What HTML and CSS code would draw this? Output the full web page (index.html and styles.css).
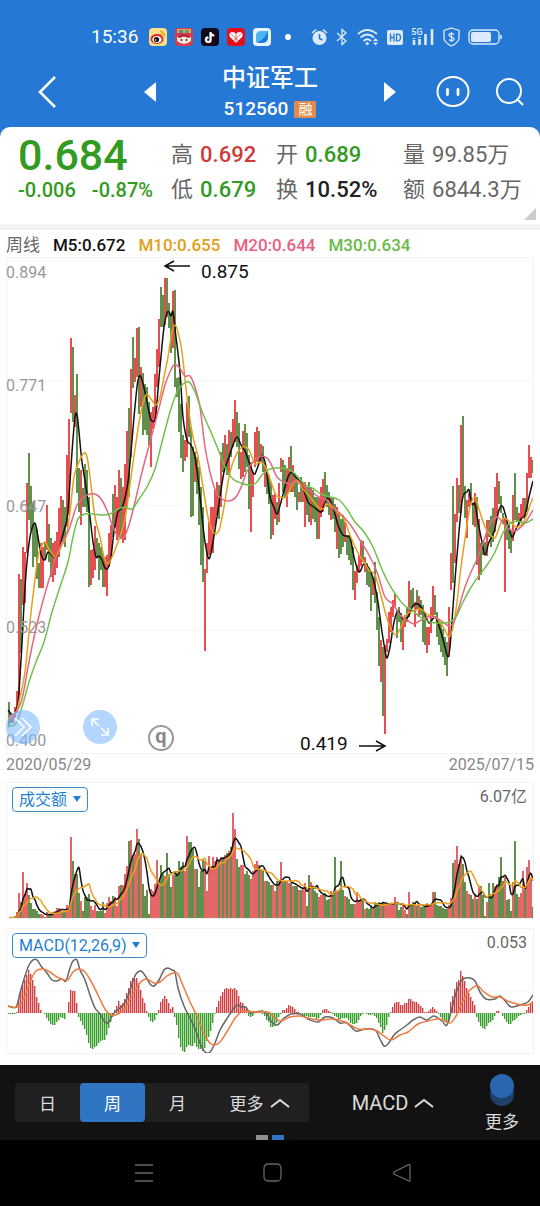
FILE: index.html
```html
<!DOCTYPE html>
<html lang="zh-CN">
<head>
    <meta charset="UTF-8">
    <meta name="viewport" content="width=device-width, initial-scale=1.0">
    <title>中证军工 512560</title>
    <link rel="stylesheet" href="styles.css">
</head>
<body>
    <header class="header">
        <div class="status-bar">
            <span class="clock">15:36</span>
            <div class="apps">
                <svg viewBox="0 0 18 18"><rect width="18" height="18" rx="4" fill="#fbe08a"/><ellipse cx="8" cy="11" rx="6.5" ry="5" fill="#d9272a"/><ellipse cx="8" cy="11.500" rx="4.600" ry="3.600" fill="#fff"/><circle cx="7.500" cy="11.500" r="2.600" fill="#111"/><circle cx="6.700" cy="12" r=".8" fill="#fff"/><path d="M11 3.500a4.500 4.500 0 0 1 4.500 5M11 5.800a2.200 2.200 0 0 1 2.200 2.500" stroke="#f39a1e" stroke-width="1.300" fill="none"/></svg>
                <svg viewBox="0 0 18 18"><rect width="18" height="18" rx="4" fill="#d93a4c"/><rect x="2" y="1" width="14" height="4" fill="#e8a34a"/><rect x="4" y="2" width="4" height="3" fill="#3e8fa0"/><rect x="10" y="2" width="4" height="3" fill="#58a888"/><path d="M2 9q7-5 14 0v4q-7 6-14 0z" fill="#fbe3d8"/><path d="M2 9q7-6 14 0l-3 1q-4-3-8 0z" fill="#b92338"/><circle cx="6.500" cy="12" r=".9" fill="#222"/><circle cx="11.500" cy="12" r=".9" fill="#222"/></svg>
                <svg viewBox="0 0 18 18"><rect width="18" height="18" rx="4" fill="#120b1c"/><g fill="none" stroke-width="1.800"><path d="M9.200 4v7.500a2.300 2.300 0 1 1-2.300-2.300M9.200 4q.4 3 3.600 3.300" stroke="#35d6d6"/><path d="M10 4.600v7.500a2.300 2.300 0 1 1-2.300-2.300M10 4.600q.4 3 3.600 3.300" stroke="#ec3a5c"/><path d="M9.600 4.300v7.500a2.300 2.300 0 1 1-2.300-2.300M9.600 4.300q.4 3 3.600 3.300" stroke="#fff"/></g></svg>
                <svg viewBox="0 0 18 18"><rect width="18" height="18" rx="4" fill="#e50f1b"/><path d="M9 15L3 9q-2-4 2-5 3 0 4 2 1-2 4-2 4 1 2 5z" fill="#fff"/><path d="M4 6l8 7M14 6l-8 7M9 6v9" stroke="#e50f1b" stroke-width=".6"/></svg>
                <svg viewBox="0 0 18 18"><rect width="18" height="18" rx="4" fill="#e9f5fd"/><path d="M3 14V8q0-5 5-5h7v5q0 6-6 6z" fill="#4db4f3"/><path d="M3.500 15Q12 11 15 3v6q0 6-6 6z" fill="#1b78dd"/></svg>
            </div>
            <span class="dot"></span>
            <div class="system">
                <svg width="17" height="18" viewBox="0 0 17 18"><circle cx="8.500" cy="10" r="7" fill="#dcebfb"/><path d="M8.500 6v4.500l3 1.500" fill="none" stroke="#2678d5" stroke-width="1.500"/><path d="M1 5l4-3.500M16 5l-4-3.500" stroke="#dcebfb" stroke-width="1.600"/></svg>
                <svg width="12" height="18" viewBox="0 0 12 18"><path d="M1 5l9 8-4 3.500v-15L10 5l-9 8" fill="none" stroke="#dcebfb" stroke-width="1.300"/></svg>
                <svg width="22" height="18" viewBox="0 0 22 18"><g fill="none" stroke="#dcebfb" stroke-width="1.900"><path d="M1 6q9-8 19 0M3.500 9.500q7-6 13.500 0M6.500 13q4-3.500 7.500 0"/></g><circle cx="10.200" cy="15.500" r="1.600" fill="#dcebfb"/><path d="M16 13l2.500-3 2.500 3zM16 14.500l2.500 3 2.500-3z" fill="#dcebfb"/></svg>
                <svg width="16" height="18" viewBox="0 0 16 18"><rect y="2" width="16" height="15" rx="2" fill="#dcebfb"/><path d="M3.500 5.500v8M7 5.500v8M3.500 9.500H7M9.500 5.500v8M9.500 6.200q4-.4 4 3.300t-4 3.300" fill="none" stroke="#2678d5" stroke-width="1.300"/></svg>
                <div class="signal"><span>5G</span><svg width="23" height="18" viewBox="0 0 23 18"><path d="M3 12v5M3 10v1M8.500 11v6M8.500 9v1M14.500 6v11M21 1v16" stroke="#dcebfb" stroke-width="2.600"/></svg></div>
                <svg width="17" height="20" viewBox="0 0 17 20"><path d="M8.500 1l7.500 2.500v7q0 5-7.500 8.500Q1 15.500 1 10.500v-7z" fill="none" stroke="#dcebfb" stroke-width="1.300"/><path d="M11 7.500q-2.500-2-4.500-.5t2 3 2 3-4.500-.2M8.500 5v10" fill="none" stroke="#dcebfb" stroke-width="1.200"/></svg>
                <svg width="34" height="18" viewBox="0 0 34 18"><rect x="1" y="2" width="30" height="14" rx="4" fill="none" stroke="#dcebfb" stroke-width="1.400"/><rect x="3" y="4" width="20" height="10" rx="2" fill="#dcebfb"/><path d="M33 7v4" stroke="#dcebfb" stroke-width="1.600"/></svg>
            </div>
        </div>
        <nav class="title-bar">
            <div class="title-left">
                <button class="icon-button" aria-label="返回"><svg width="20" height="34" viewBox="0 0 20 34"><path d="M18 2L3 17l15 15" fill="none" stroke="#fff" stroke-width="2.500"/></svg></button>
                <button class="icon-button" aria-label="上一个"><svg width="12" height="20" viewBox="0 0 12 20"><path d="M12 0v20L0 10z" fill="#fff"/></svg></button>
            </div>
            <div class="title">
                <h1>中证军工</h1>
                <p>512560 <span class="badge">融</span></p>
            </div>
            <div class="title-right">
                <button class="icon-button next" aria-label="下一个"><svg width="12" height="20" viewBox="0 0 12 20"><path d="M0 0v20l12-10z" fill="#fff"/></svg></button>
                <button class="icon-button" aria-label="助手"><svg width="34" height="32" viewBox="0 0 34 32"><ellipse cx="17" cy="15.500" rx="15.500" ry="14.500" fill="none" stroke="#fff" stroke-width="2"/><path d="M11.500 13.500v5M22 13.500v5" stroke="#fff" stroke-width="2.800" stroke-linecap="round"/></svg></button>
                <button class="icon-button" aria-label="搜索"><svg width="28" height="28" viewBox="0 0 28 28"><circle cx="13" cy="13" r="12" fill="none" stroke="#fff" stroke-width="2"/><path d="M21 21l6 6" stroke="#fff" stroke-width="2"/></svg></button>
            </div>
        </nav>
    </header>

    <section class="quote">
        <div class="price">
            <strong>0.684</strong>
            <p><span>-0.006</span><span>-0.87%</span></p>
        </div>
        <dl class="stats">
            <div><dt>高</dt><dd class="up">0.692</dd></div>
            <div><dt>开</dt><dd class="down">0.689</dd></div>
            <div><dt>量</dt><dd class="plain">99.85万</dd></div>
            <div><dt>低</dt><dd class="down">0.679</dd></div>
            <div><dt>换</dt><dd>10.52%</dd></div>
            <div><dt>额</dt><dd class="plain">6844.3万</dd></div>
        </dl>
        <span class="corner"></span>
    </section>

    <main class="charts">
        <div class="legend">
            <span class="period">周线</span>
            <span class="ma5">M5:0.672</span>
            <span class="ma10">M10:0.655</span>
            <span class="ma20">M20:0.644</span>
            <span class="ma30">M30:0.634</span>
        </div>

        <div class="panel">
            <svg class="chart" viewBox="6 0 528 497">
                <path class="grid" d="M6 124H534M6 249H534M6 373H534"/>
                <g id="candles"></g>
                <g id="averages"></g>
                <g class="axis">
                    <text x="6" y="21">0.894</text>
                    <text x="6" y="134">0.771</text>
                    <text x="6" y="255">0.647</text>
                    <text x="6" y="376">0.523</text>
                    <text x="6" y="489">0.400</text>
                </g>
                <g class="note">
                    <text x="201" y="21">0.875</text>
                    <path d="M190 9H165M174 4l-9 5 9 5"/>
                    <text x="300" y="493">0.419</text>
                    <path d="M359 489H385M376 484l9 5-9 5"/>
                </g>
            </svg>
            <div class="tools">
                <div class="tool-group">
                    <button class="round" aria-label="展开"><svg width="34" height="34" viewBox="0 0 34 34"><path d="M9 8l9 9-9 9M16 8l9 9-9 9" fill="none" stroke="#fff" stroke-width="1.600"/></svg></button>
                    <button class="round" aria-label="全屏"><svg width="34" height="34" viewBox="0 0 34 34"><path d="M9 16V9h7M9 9l7 7M25 18v7h-7M25 25l-7-7" fill="none" stroke="#fff" stroke-width="1.600"/></svg></button>
                </div>
                <span class="mark">q</span>
            </div>
        </div>
        <div class="dates"><span>2020/05/29</span><span>2025/07/15</span></div>

        <div class="panel volume">
            <svg class="chart" viewBox="6 0 528 137">
                <path class="grid" d="M6 68H534"/>
                <g id="volume"></g>
            </svg>
            <label class="picker"><select aria-label="指标"><option>成交额</option></select></label>
            <span class="value">6.07亿</span>
        </div>

        <div class="panel macd">
            <svg class="chart" viewBox="6 0 528 126">
                <path class="grid" d="M6 63H534M6 85H534"/>
                <g id="macd"></g>
            </svg>
            <label class="picker"><select aria-label="副图指标"><option>MACD(12,26,9)</option></select></label>
            <span class="value">0.053</span>
        </div>
    </main>

    <footer class="toolbar">
        <div class="tabs">
            <button>日</button>
            <button class="active">周</button>
            <button>月</button>
            <button class="wide">更多 <svg width="20" height="10" viewBox="0 0 20 10"><path d="M1 9l9-7 9 7"/></svg></button>
        </div>
        <button class="indicator">MACD <svg width="20" height="10" viewBox="0 0 20 10"><path d="M1 9l9-7 9 7"/></svg></button>
        <button class="more"><svg width="24" height="32" viewBox="0 0 24 32"><circle cx="12" cy="20" r="12" fill="#1e4069"/><circle cx="12" cy="12" r="12" fill="#2a67b1"/></svg>更多</button>
        <div class="pager"><span></span><span class="current"></span></div>
    </footer>
    <div class="system-nav">
        <button aria-label="菜单"><svg width="20" height="20" viewBox="0 0 20 20"><path d="M1 2h18M1 10h18M1 18h18"/></svg></button>
        <button aria-label="主页"><svg width="20" height="20" viewBox="0 0 20 20"><rect x="1" y="1" width="17" height="17" rx="4"/></svg></button>
        <button aria-label="后退"><svg width="20" height="20" viewBox="0 0 20 20"><path d="M17 1.500q1 0 1 1v15q0 1-1 .5L2 11q-1-1 0-2z"/></svg></button>
    </div>

    <script src="chart.js"></script>
</body>
</html>
```

FILE: styles.css
```css
* {
    box-sizing: border-box;
}

body {
    margin: 0;
    background-color: #2678d5;
    font-family: Roboto, "Noto Sans CJK SC", sans-serif;
    color: #222;
}

h1, p, dl, dd {
    margin: 0;
}

button {
    padding: 0;
    border: none;
    background: none;
    color: inherit;
    font: inherit;
    cursor: pointer;
}

svg {
    display: block;
    flex: none;
}

.header {
    color: #fff;
}

.status-bar {
    display: flex;
    align-items: center;
    height: 61px;
    padding: 12px 38px 0 91px;
}

.clock {
    width: 58px;
    font-size: 19px;
}

.apps {
    display: flex;
    gap: 8px;
}

.apps svg {
    width: 18px;
    height: 18px;
}

.dot {
    width: 6px;
    height: 6px;
    margin-left: 14px;
    border-radius: 50%;
    background-color: #fff;
}

.system {
    display: flex;
    flex: 1;
    align-items: center;
    justify-content: space-between;
    margin-left: 20px;
}

.signal {
    position: relative;
}

.signal span {
    position: absolute;
    top: -1px;
    left: 0;
    font-size: 9px;
    font-weight: 500;
    line-height: 10px;
    color: #dcebfb;
}

.title-bar {
    display: grid;
    grid-template-columns: 1fr 200px 1fr;
    align-items: center;
    padding: 2px 0 6px;
}

.title-left, .title-right {
    display: flex;
    align-items: center;
    justify-content: space-between;
}

.title-left {
    padding: 0 14px 0 37px;
}

.title-right {
    padding: 0 16px 0 14px;
}

.next {
    margin-right: 14px;
}

.title {
    text-align: center;
}

.title h1 {
    font-size: 24px;
    font-weight: 500;
    line-height: 30px;
}

.title p {
    display: flex;
    align-items: center;
    justify-content: center;
    gap: 6px;
    margin-top: 4px;
    font-size: 19px;
    font-weight: 500;
    line-height: 24px;
}

.badge {
    width: 22px;
    border-radius: 1px;
    background-color: #e08b4c;
    font-size: 14px;
    font-weight: 400;
    line-height: 17px;
}

.quote {
    position: relative;
    display: flex;
    height: 97px;
    padding: 9px 16px 0 18px;
    border-radius: 10px 10px 0 0;
    background-color: #fff;
}

.price {
    width: 153px;
    color: #339a22;
    font-weight: 500;
}

.price strong {
    display: block;
    font-size: 43px;
    font-weight: 500;
    line-height: 38px;
}

.price p {
    display: flex;
    gap: 16px;
    margin-top: 4px;
    font-size: 20px;
    line-height: 24px;
    white-space: nowrap;
}

.stats {
    display: grid;
    flex: 1;
    grid-template-columns: 105px 127px 1fr;
    grid-auto-rows: 35px;
}

.stats div {
    display: flex;
    gap: 7px;
    font-size: 22px;
    line-height: 38px;
    white-space: nowrap;
}

.stats dt {
    color: #666;
}

.stats dd {
    font-weight: 500;
}

.stats .up {
    color: #cf3a3a;
}

.stats .down {
    color: #339a22;
}

.stats .plain {
    font-weight: 400;
    color: #666;
}

.corner {
    position: absolute;
    right: 4px;
    bottom: 4px;
    border-bottom: 12px solid #ccc;
    border-left: 12px solid transparent;
}

.charts {
    padding: 0 6px 11px;
    border-top: 6px solid #f3f3f3;
    background-color: #fff;
}

.legend {
    display: flex;
    gap: 13px;
    padding-top: 3px;
    font-size: 17px;
    font-weight: 500;
    line-height: 24px;
    white-space: nowrap;
}

.period {
    font-weight: 400;
    color: #666;
}

.ma5 {
    color: #111;
}

.ma10 {
    color: #e0a018;
}

.ma20 {
    color: #e8607f;
}

.ma30 {
    color: #6aba48;
}

.panel {
    position: relative;
    outline: 1px solid #f3f3f3;
    outline-offset: -1px;
}

.chart {
    width: 100%;
    height: auto;
    overflow: visible;
}

.chart path {
    fill: none;
}

.grid {
    stroke: #f5f5f5;
}

.line {
    stroke-width: 1.5;
    stroke-linejoin: round;
}

.axis text {
    fill: #999;
    font-size: 16px;
}

.note text {
    fill: #111;
    font-size: 19px;
}

.note path {
    stroke: #111;
    stroke-width: 1.5;
}

.tools {
    position: absolute;
    bottom: 3px;
    left: 0;
    display: flex;
    align-items: flex-end;
    gap: 31px;
}

.tool-group {
    display: flex;
    gap: 43px;
    padding-bottom: 7px;
}

.round {
    border-radius: 50%;
    background-color: rgba(128, 187, 255, 0.6);
}

.mark {
    width: 26px;
    height: 26px;
    border: 2px solid #999;
    border-radius: 50%;
    color: #888;
    font-size: 20px;
    font-weight: 700;
    line-height: 18px;
    text-align: center;
}

.dates {
    display: flex;
    justify-content: space-between;
    color: #888;
    font-size: 16px;
    line-height: 22px;
    padding-bottom: 6px;
}

.picker {
    position: absolute;
    top: 5px;
    left: 6px;
}

.picker::after {
    position: absolute;
    top: 9px;
    right: 7px;
    border-top: 6px solid #1d7fd0;
    border-right: 4px solid transparent;
    border-left: 4px solid transparent;
    content: "";
    pointer-events: none;
}

.picker select {
    height: 25px;
    padding: 0 19px 0 6px;
    border: 1px solid #3b8cc9;
    border-radius: 4px;
    background-color: #fff;
    appearance: none;
    color: #1d7fd0;
    font-family: inherit;
    font-size: 16px;
}

.value {
    position: absolute;
    top: 4px;
    right: 7px;
    color: #666;
    font-size: 16px;
    line-height: 22px;
}

.macd {
    margin-top: 9px;
}

.toolbar {
    position: relative;
    display: flex;
    align-items: center;
    justify-content: space-between;
    height: 75px;
    padding: 0 21px 0 15px;
    background-color: #121212;
    color: #ddd;
    font-size: 17px;
}

.toolbar path {
    fill: none;
    stroke: #ddd;
    stroke-width: 2;
}

.tabs {
    display: flex;
    border-radius: 4px;
    background-color: #202020;
}

.tabs button {
    width: 65px;
    height: 39px;
}

.tabs .wide {
    width: 99px;
}

.tabs .active {
    border-radius: 4px;
    background-color: #3075c2;
    color: #fff;
}

.tabs .wide, .indicator {
    display: flex;
    align-items: center;
    justify-content: center;
    gap: 6px;
}

.indicator {
    margin-right: 8px;
    font-size: 20px;
}

.more {
    display: flex;
    flex-direction: column;
    align-items: center;
    gap: 4px;
    padding-top: 2px;
    line-height: 24px;
}

.pager {
    position: absolute;
    bottom: 0;
    left: 0;
    display: flex;
    justify-content: center;
    gap: 4px;
    width: 100%;
}

.pager span {
    width: 12px;
    height: 5px;
    background-color: #8f8f8f;
}

.pager .current {
    background-color: #3075c2;
}

.system-nav {
    display: flex;
    justify-content: center;
    gap: 109px;
    padding: 23px 0 23px 5px;
    background-color: #000;
}

.system-nav path, .system-nav rect {
    fill: none;
    stroke: #666;
    stroke-width: 1.3;
}
```

FILE: chart.js
```js
const STEP = 2;
const START = 9;

// one entry per week: r = up, g = down, then the top and bottom of the bar
const weeks = `
g445-470 g456-466 r458-466 r450-461 r434-456 r317-443 g322-396 r290-348 r295-346 r226-296
g196-263 g229-273 g245-310 g266-300 g272-322 g306-331 r286-331 r290-331 g285-303 r248-293
g267-305 g281-320 r286-325 r284-318 r275-311 r251-300 r239-285 g243-285 g250-290 r198-270
r162-258 r81-156 g90-165 r138-170 g117-236 g211-255 r213-268 g231-250 g207-250 g213-255
g240-330 r293-328 r292-321 r269-313 g281-301 g286-323 g290-313 g296-330 r300-330 r298-339
r276-310 r268-300 g237-280 r228-270 r240-283 r213-280 g221-282 r230-286 r207-283 r174-250
g151-240 r112-200 g80-131 r101-125 r71-120 g70-157 r110-150 g116-178 g127-173 g130-178
g145-188 r155-210 r150-172 r117-163 r92-130 r62-110 g30-70 g38-70 r21-68 g21-60
g46-71 g56-96 r34-91 g33-130 g121-140 g120-175 g147-201 g178-215 r183-204 r145-200
g139-180 g170-260 g190-259 r195-225 g200-237 g210-268 g230-308 g250-325 r312-394 r286-316
r265-298 r250-295 r250-296 r233-270 r225-258 g228-262 r195-250 g186-215 r178-212 g187-218
r173-218 g175-200 r162-190 r143-185 g155-190 g166-212 r195-222 r174-220 g167-215 g176-210
g198-252 r205-275 r215-240 r175-210 r170-205 g174-205 r187-205 g189-215 r206-230 g215-237
g218-247 g225-282 r238-278 r236-262 g245-268 r226-265 r201-215 g203-235 g208-240 r211-250
r200-235 g189-235 r208-235 g216-240 g221-253 r235-245 g220-245 r225-245 r225-270 g230-258
g225-265 r230-268 g233-262 g240-265 g240-282 r241-282 r230-260 r222-255 g215-245 g228-250
g235-258 r241-263 g240-262 g247-275 r250-292 g255-301 g262-297 g258-290 r265-285 g278-298
g278-303 g283-308 g290-333 r314-343 r308-326 r298-315 r283-309 g284-305 r300-315 g306-328
g313-330 g315-354 r320-338 g305-346 g335-373 g360-409 r383-425 g390-459 r388-477 r382-395
r355-386 r350-375 r343-360 r337-350 g353-381 g350-365 g356-385 r360-393 r358-370 g350-365
r324-360 g333-355 g331-350 r345-370 g333-352 r339-360 g343-358 g348-385 g358-388 r370-396
r370-388 r350-376 r329-360 g338-358 g355-380 g362-388 g365-395 g372-400 g380-408 g385-419
r350-400 r296-333 g229-326 r257-306 r221-265 g228-256 r168-256 g159-238 g229-261 r243-281
r236-250 g226-246 g246-268 r236-270 g240-308 r262-323 g286-318 g285-298 g285-298 r263-299
g263-280 g259-290 g251-285 r230-275 r216-260 g224-247 g239-256 g256-267 r261-335 g265-283
g267-292 g273-296 r238-284 g216-263 g250-265 r256-268 r247-265 r241-260 g241-262 r216-255
r188-221 r200-221 g203-216`.trim().split(/\s+/).map((item) => {
    const [top, bottom] = item.slice(1).split("-").map(Number);
    return { up: item[0] === "r", top, bottom };
});

const amounts = [
    1, 1, 2, 3, 7, 26, 17, 47, 25, 36, 24, 16, 10, 10, 8, 5, 5, 4, 2, 7, 4, 5, 7, 8, 11, 11, 10, 7, 7, 14, 12,
    82, 58, 45, 45, 26, 18, 8, 22, 22, 25, 13, 9, 14, 8, 8, 8, 17, 6, 16, 22, 18, 23, 22, 13, 33, 34, 34, 45, 53,
    78, 79, 62, 65, 90, 80, 65, 35, 23, 29, 5, 30, 28, 35, 59, 38, 54, 45, 43, 66, 45, 32, 44, 48, 48, 58, 52, 57,
    48, 83, 77, 77, 70, 50, 50, 32, 48, 60, 58, 28, 63, 50, 62, 58, 62, 58, 62, 62, 64, 66, 68, 72, 106, 90, 60,
    52, 54, 54, 45, 48, 44, 40, 48, 55, 58, 54, 50, 48, 38, 38, 37,
    34, 34, 28, 38, 38, 57, 38, 38, 38, 36, 36, 33, 33, 33, 29, 29, 30, 36, 13, 44, 37, 33, 28, 26, 22, 24, 24, 26,
    19, 20, 28, 26, 62, 28, 28, 58, 29, 23, 22, 20, 15, 15, 15, 27, 18, 20, 20, 10, 11, 10, 13, 12, 17, 16, 17, 15,
    17, 15, 14, 15, 16, 14, 22, 16, 9, 12, 15, 9, 5, 27, 14, 17, 16, 13, 14, 12, 12, 12, 15, 15, 15, 27, 27, 14,
    13, 13, 11, 10, 10, 14, 21, 56, 59, 73, 55, 64, 55, 37, 28, 25, 24, 20, 24, 20, 33, 33, 24, 3, 17, 36, 25, 36,
    33, 35, 42, 62, 38, 42, 19, 20, 8, 37, 78, 25, 22, 26, 48, 29, 52, 59, 40, 12
];

const macdBars = [
    -1, -1, -1, -1, 1, 15, 22, 28, 33, 38, 43, 39, 33, 27, 16, 10, 3, 0, -1, -5, -8, -11, -12, -12, -9, -7, -4, -5,
    -6, 0, 11, 23, 22, 22, 10, -4, -8, -12, -16, -22, -30, -35, -36, -34, -33, -30, -28, -27, -27, -22, -15, -9, -4,
    3, 7, 12, 8, 10, 14, 20, 25, 32, 35, 34, 35, 30, 23, 15, 10, 2, -4, -8, -9, -7, -2, 3, 11, 14, 17, 14, 10, 4, 6,
    -4, -12, -25, -34, -38, -39, -34, -32, -33, -33, -30, -34, -36, -36, -38, -35, -28, -24, -18, -10, -1, 6, 12,
    17, 21, 24, 25, 24, 25, 24, 25, 23, 17, 11, 10, 7, 4, -3, -4, -3, 0, 2, 2, 2, -1, -3, -7, -9,
    -14, -14, -13, -10, -4, -1, 3, 3, 5, 8, 7, 6, 4, 1, 1, 0, -2, -3, -3, -4, -4, -4, -4, -6, -5, -2, 3, 4, 4, 2, 1,
    -1, -3, -4, -7, -6, -5, -5, -5, -7, -10, -11, -11, -10, -7, -3, -1, 0, -1, -2, -2, -1, -3, -5, -10, -14, -20,
    -17, -12, -4, 1, 6, 10, 11, 11, 8, 8, 10, 10, 14, 14, 12, 11, 11, 9, 7, 5, 1, 1, 2, 4, 6, 4, 2, -1, -4, -6, -8,
    -10, -9, 11, 17, 24, 31, 33, 42, 37, 32, 25, 20, 16, 12, 8, -4, -9, -13, -15, -16, -13, -10, -9, -7, -3, 2, 2,
    0, -3, -6, -9, -11, -11, -8, -7, -5, -3, -2, -1, -1, 3, 6, 9, 12
];

const lines = {
    ma30: "8,470 16,466 22,450 29,425 36,405 44,385 52,355 60,330 68,305 73,280 78,262 85,257 93,257 103,258 110,257 118,252 125,250 132,252 139,242 147,230 155,212 162,185 170,155 177,135 183,127 189,125 195,135 203,157 210,173 218,192 225,210 233,222 241,226 249,228 256,226 262,218 270,212 280,211 290,213 298,220 306,228 314,232 321,237 330,240 339,243 347,252 355,265 364,275 373,290 381,310 388,325 396,338 404,348 412,353 420,360 430,365 440,366 450,365 457,358 463,345 470,332 478,320 487,308 495,295 502,278 509,267 517,264 525,266 533,262",
    ma20: "8,460 16,455 22,442 28,410 33,385 40,355 48,326 56,300 62,285 68,275 73,260 77,248 84,240 90,237 97,238 103,245 108,256 113,270 118,279 124,280 129,268 135,245 142,215 150,185 158,155 165,128 170,115 174,108 179,110 185,119 190,119 195,130 200,150 205,190 210,215 216,235 222,242 229,244 236,240 242,228 248,212 256,202 263,199 270,205 277,220 284,225 291,227 297,223 304,230 312,235 319,240 328,244 335,252 343,259 352,270 361,285 369,298 377,315 385,340 393,347 400,358 407,363 414,367 421,363 428,360 435,360 443,365 449,369 454,365 459,350 465,330 471,315 478,300 484,283 490,267 497,260 503,266 509,272 515,274 521,270 527,263 533,253",
    ma10: "8,462 16,455 20,440 25,415 30,365 34,330 38,300 41,290 45,285 50,294 56,300 62,288 66,280 70,255 74,220 79,205 84,196 87,200 90,220 95,260 100,280 104,300 108,307 112,300 118,285 123,270 127,250 131,220 136,185 141,155 146,138 151,142 156,148 160,140 164,120 168,100 172,75 175,68 178,75 182,95 187,140 192,175 198,200 203,230 208,260 213,275 217,276 220,270 224,250 229,220 235,200 241,191 246,190 250,195 255,207 260,205 265,209 270,222 276,238 280,240 286,240 292,228 297,224 303,232 310,240 318,250 323,252 328,247 337,255 344,262 350,278 358,296 364,305 369,313 375,318 380,335 386,358 391,372 396,378 401,370 407,357 414,354 421,352 428,358 435,360 440,365 445,373 449,380 453,370 457,345 461,310 466,275 470,250 475,240 479,252 485,270 490,277 495,281 500,268 504,261 510,265 516,270 521,268 526,260 530,248 533,241",
    ma5: "8,453 13,458 17,450 19,435 22,386 25,330 28,295 31,275 35,266 38,280 41,297 45,303 48,295 54,300 58,298 61,285 65,270 67,262 69,240 72,195 75,160 77,158 79,175 82,205 86,230 90,260 93,285 96,300 99,299 102,303 105,311 108,311 111,300 114,275 118,255 121,252 124,245 128,225 131,195 134,160 137,130 139,120 141,120 145,135 149,155 151,163 155,163 157,145 160,110 164,70 167,56 169,55 171,59 173,55 176,80 180,115 183,160 187,183 191,188 195,200 199,230 202,260 205,285 208,300 210,300 213,285 217,260 220,240 224,215 229,200 233,188 237,180 241,188 245,194 249,205 254,217 257,212 261,200 263,199 266,210 270,240 274,250 277,257 281,245 285,230 290,216 296,220 302,228 308,245 314,250 321,255 324,248 328,241 333,250 338,268 343,278 350,281 354,300 359,315 364,307 370,313 374,325 378,345 382,375 385,393 387,401 390,390 394,365 398,354 403,362 408,360 413,349 418,347 424,355 429,366 435,360 440,372 445,390 448,400 450,390 453,350 456,310 459,275 462,245 464,237 467,235 469,233 472,247 475,247 478,265 482,285 485,298 489,285 494,275 499,253 503,250 508,268 512,280 516,272 521,262 525,258 529,240 533,224",
    dif: "8,78 16,79 20,65 25,48 29,37 33,32 37,32 41,38 47,45 52,52 57,53 62,51 66,53 70,40 73,33 77,32 80,42 85,52 90,67 95,80 100,86 104,93 108,95 112,88 116,83 120,80 124,76 128,68 132,56 136,46 141,43 146,49 150,56 154,58 159,52 164,42 168,40 172,42 175,44 178,60 184,78 190,90 196,103 200,115 205,124 210,124 215,115 220,102 226,92 232,83 237,77 242,79 246,79 250,85 256,84 262,83 267,86 271,93 277,97 284,90 291,86 300,86 308,91 318,94 325,89 333,90 340,95 347,95 356,103 365,101 375,102 380,111 384,118 388,116 394,107 400,102 407,97 413,92 420,89 427,92 434,88 442,93 447,97 452,80 456,65 460,55 463,51 470,50 475,53 480,64 486,71 495,71 500,68 506,74 511,79 520,77 528,74 533,67",
    dea: "8,78 18,79 24,70 30,54 36,43 43,41 50,44 57,49 67,52 73,44 78,41 85,44 92,55 98,67 105,81 111,87 118,86 125,80 132,68 139,56 146,51 154,55 160,54 167,48 173,45 178,46 184,60 191,76 197,88 203,104 209,114 214,117 220,114 228,102 236,89 244,83 255,84 268,84 275,90 281,93 290,89 300,88 308,90 320,92 332,91 345,94 358,101 370,101 377,103 384,108 391,112 400,107 408,104 418,96 428,93 440,91 450,95 456,88 462,75 468,64 474,59 478,58 484,64 492,69 500,69 510,74 522,77 528,77 533,74"
};

function bar(index, top, bottom, width, color) {
    const x = START + index * STEP - 1;
    return `<rect x="${x}" y="${top}" width="${width}" height="${bottom - top}" fill="${color}"/>`;
}

// smooth curve through all the points
function line(text, color) {
    const pts = text.split(" ").map((pair) => pair.split(",").map(Number));
    let d = `M${pts[0]}`;
    for (let i = 0; i < pts.length - 1; i++) {
        const [before, from, to, after] = [pts[i - 1] || pts[i], pts[i], pts[i + 1], pts[i + 2] || pts[i + 1]];
        const c1 = from.map((v, k) => (v + (to[k] - before[k]) / 6).toFixed(1));
        const c2 = to.map((v, k) => (v - (after[k] - from[k]) / 6).toFixed(1));
        d += `C${c1} ${c2} ${to}`;
    }
    return `<path class="line" d="${d}" stroke="${color}"/>`;
}

function average(values, days, base) {
    return values.map((_, i) => {
        const part = values.slice(Math.max(0, i - days + 1), i + 1);
        const mean = part.reduce((a, b) => a + b, 0) / part.length;
        return `${START + i * STEP},${(base - mean).toFixed(1)}`;
    }).join(" ");
}

document.getElementById("candles").innerHTML = weeks
    .map((w, i) => bar(i, w.top, w.bottom, 2, w.up ? "#e64e50" : "#628f4b"))
    .join("");

document.getElementById("averages").innerHTML =
    line(lines.ma5, "#111") +
    line(lines.ma10, "#e3a21b") +
    line(lines.ma20, "#e5687f") +
    line(lines.ma30, "#70c04c");

document.getElementById("volume").innerHTML = amounts
    .map((v, i) => bar(i, 137 - v, 137, 2, weeks[i].up ? "#e36668" : "#648e4c"))
    .join("") +
    line(average(amounts, 5, 137), "#111") +
    line(average(amounts, 10, 137), "#eda01c");

document.getElementById("macd").innerHTML = macdBars
    .map((v, i) => bar(i, Math.min(85, 85 - v), Math.max(85, 85 - v), 1.4, v > 0 ? "#d23f42" : "#37a02b"))
    .join("") +
    line(lines.dif, "#666") +
    line(lines.dea, "#ee7a40");
```
